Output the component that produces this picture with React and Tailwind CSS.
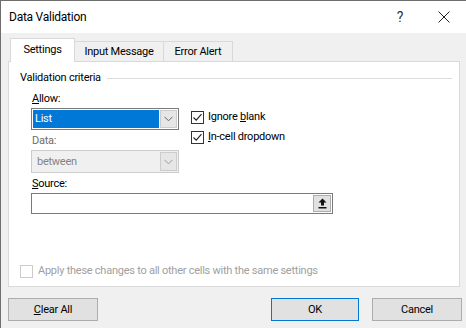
import React from 'react';

function Check({ checked, disabled }) {
  return (
    <div
      className={`w-[13px] h-[13px] border bg-white flex items-center justify-center shrink-0 ${
        disabled ? 'border-[#cccccc]' : 'border-[#333333]'
      }`}
    >
      {checked && (
        <svg width="11" height="11" viewBox="0 0 11 11">
          <path d="M1.5 5.5 L4.2 8.2 L9.5 2.2" fill="none" stroke="#202020" strokeWidth="1.1" />
        </svg>
      )}
    </div>
  );
}

function Chevron({ color }) {
  return (
    <svg width="9" height="6" viewBox="0 0 9 6">
      <path d="M0.5 0.8 L4.5 4.8 L8.5 0.8" fill="none" stroke={color} strokeWidth="1" />
    </svg>
  );
}

export default function App() {
  return (
    <div
      className="w-[466px] h-[328px] bg-[#f0f0f0] border-l border-t border-[#6e6e6e] text-[11px] leading-[16px] tracking-[-0.25px] text-black overflow-hidden"
      style={{ fontFamily: 'Roboto, sans-serif' }}
    >
      {/* Title bar */}
      <div className="h-[32px] bg-white flex items-center pl-[8px]">
        <span className="flex-1 text-[12px]">Data Validation</span>
        <span className="w-[20px] text-center text-[14px] text-[#333] mr-[28px]">?</span>
        <svg width="12" height="12" viewBox="0 0 12 12" className="mr-[16px]">
          <path d="M0.5 0.5 L11.5 11.5 M11.5 0.5 L0.5 11.5" stroke="#222" strokeWidth="1" />
        </svg>
      </div>

      <div className="pl-[7px] pt-[5px]">
        {/* Tabs */}
        <div className="flex items-end h-[23px] ml-[2px]">
          <div className="relative z-10 h-[24px] w-[65px] bg-white border border-b-0 border-[#d9d9d9] flex items-center justify-center -mb-px pb-[1px]">
            Settings
          </div>
          <div className="h-[20px] w-[89px] border border-l-0 border-b-0 border-[#d9d9d9] flex items-center justify-center">
            Input Message
          </div>
          <div className="h-[20px] w-[69px] border border-l-0 border-b-0 border-[#d9d9d9] flex items-center justify-center">
            Error Alert
          </div>
        </div>

        {/* Panel */}
        <div className="w-[452px] h-[226px] bg-white border border-[#d9d9d9] flex flex-col">
          <div className="flex items-center h-[16px] mt-[8px] pl-[11px] pr-[7px]">
            <span>Validation criteria</span>
            <div className="flex-1 h-px bg-[#dcdcdc] ml-[6px]" />
          </div>

          <div className="flex pl-[22px] mt-[5px]">
            <div className="w-[148px] flex flex-col">
              <div className="h-[16px] pl-[1px]">
                <span className="underline">A</span>llow:
              </div>
              <div className="mt-[1px] h-[22px] border border-[#7a7a7a] flex bg-white">
                <div className="flex-1 m-[1px] bg-[#0078d7] text-white pl-[2px] leading-[18px]">List</div>
                <div className="w-[17px] my-[1px] mr-[1px] bg-[#e6e6e6] border border-[#cccccc] flex items-center justify-center">
                  <Chevron color="#666" />
                </div>
              </div>
              <div className="h-[16px] pl-[1px] mt-[3px] text-[#6d6d6d]">Data:</div>
              <div className="mt-[1px] h-[23px] border border-[#cccccc] flex bg-[#f0f0f0]">
                <div className="flex-1 text-[#838383] pl-[5px] leading-[21px]">between</div>
                <div className="w-[17px] my-[1px] mr-[1px] bg-[#e6e6e6] border border-[#cccccc] flex items-center justify-center">
                  <Chevron color="#9a9a9a" />
                </div>
              </div>
            </div>

            <div className="ml-[12px] mt-[19px] flex flex-col gap-[6px]">
              <div className="flex items-center gap-[4px] h-[14px]">
                <Check checked />
                <span>
                  Ignore <span className="underline">b</span>lank
                </span>
              </div>
              <div className="flex items-center gap-[4px] h-[14px]">
                <Check checked />
                <span>
                  <span className="underline">I</span>n-cell dropdown
                </span>
              </div>
            </div>
          </div>

          <div className="pl-[22px]">
            <div className="h-[16px] pl-[1px] mt-[3px]">
              <span className="underline">S</span>ource:
            </div>
            <div className="mt-[1px] w-[302px] h-[21px] border border-[#7a7a7a] flex bg-white">
              <div className="flex-1" />
              <div className="w-[18px] m-[1px] bg-[#e1e1e1] border border-[#adadad] flex items-center justify-center">
                <svg width="9" height="11" viewBox="0 0 9 11">
                  <path d="M4.5 0.5 L8.5 4.5 L6 4.5 L6 7.5 L3 7.5 L3 4.5 L0.5 4.5 Z" fill="#111" />
                  <rect x="0.5" y="9" width="8" height="1.5" fill="#111" />
                </svg>
              </div>
            </div>
          </div>

          <div className="flex-1" />

          <div className="flex items-center gap-[5px] pl-[11px] mb-[7px] text-[#a0a0a0]">
            <Check disabled />
            <span>Apply these changes to all other cells with the same settings</span>
          </div>
        </div>

        {/* Buttons */}
        <div className="flex mt-[11px] w-[454px]">
          <div className="w-[90px] h-[23px] bg-[#e1e1e1] border border-[#adadad] flex items-center justify-center">
            <span>
              <span className="underline">C</span>lear All
            </span>
          </div>
          <div className="flex-1" />
          <div className="w-[88px] h-[23px] bg-[#e1e1e1] border border-[#0078d7] flex items-center justify-center">
            OK
          </div>
          <div className="w-[90px] h-[23px] ml-[13px] bg-[#e1e1e1] border border-[#adadad] flex items-center justify-center">
            Cancel
          </div>
        </div>
      </div>
    </div>
  );
}
